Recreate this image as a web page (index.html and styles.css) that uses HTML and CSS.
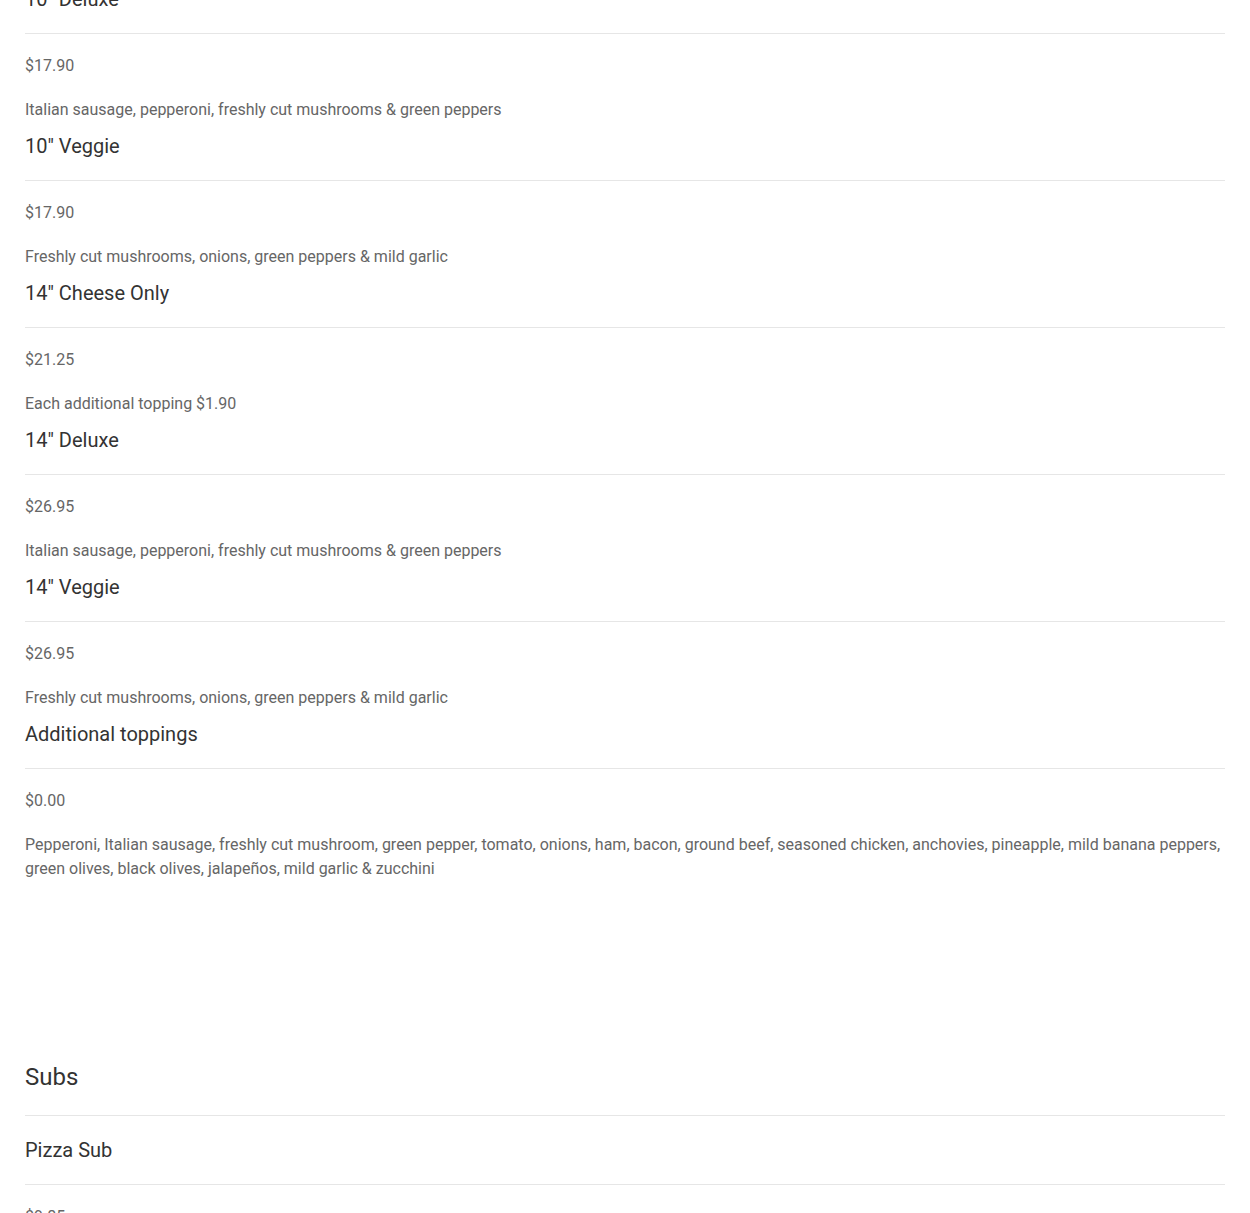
FILE: index.html
```html
<!DOCTYPE html>
<html lang="en">
<head>
  <meta charset="UTF-8" />
  <meta name="viewport" content="width=device-width, initial-scale=1.0" />
  <title>Menu</title>
  <link rel="stylesheet" href="styles.css">
</head>
<body>
  <div class="menu">
    <div class="section section-pizza">
      <div class="item">
        <h3 class="item-name">10" Deluxe</h3>
        <p class="item-price">$17.90</p>
        <p class="item-desc">Italian sausage, pepperoni, freshly cut mushrooms &amp; green peppers</p>
      </div>
      <div class="item">
        <h3 class="item-name">10" Veggie</h3>
        <p class="item-price">$17.90</p>
        <p class="item-desc">Freshly cut mushrooms, onions, green peppers &amp; mild garlic</p>
      </div>
      <div class="item">
        <h3 class="item-name">14" Cheese Only</h3>
        <p class="item-price">$21.25</p>
        <p class="item-desc">Each additional topping $1.90</p>
      </div>
      <div class="item">
        <h3 class="item-name">14" Deluxe</h3>
        <p class="item-price">$26.95</p>
        <p class="item-desc">Italian sausage, pepperoni, freshly cut mushrooms &amp; green peppers</p>
      </div>
      <div class="item">
        <h3 class="item-name">14" Veggie</h3>
        <p class="item-price">$26.95</p>
        <p class="item-desc">Freshly cut mushrooms, onions, green peppers &amp; mild garlic</p>
      </div>
      <div class="item">
        <h3 class="item-name">Additional toppings</h3>
        <p class="item-price">$0.00</p>
        <p class="item-desc">Pepperoni, Italian sausage, freshly cut mushroom, green pepper, tomato, onions, ham, bacon, ground beef, seasoned chicken, anchovies, pineapple, mild banana peppers, green olives, black olives, jalapeños, mild garlic &amp; zucchini</p>
      </div>
    </div>

    <div class="section">
      <h2 class="section-title">Subs</h2>
      <div class="item">
        <h3 class="item-name">Pizza Sub</h3>
        <p class="item-price">$9.85</p>
        <p class="item-desc">Pizza sauce, mozzarella &amp; pepperoni</p>
      </div>
    </div>
  </div>
</body>
</html>
```

FILE: styles.css
```css
body {
  margin: 0;
  font-family: Roboto, 'Liberation Sans', sans-serif;
  background-color: #fff;
  color: #333;
  overflow: hidden;
}

.menu {
  padding: 0 25px;
  margin-top: -13px;
}

.section + .section {
  margin-top: 182px;
}

.section-title {
  margin: 0;
  font-size: 24px;
  font-weight: 400;
  line-height: 28px;
  padding-bottom: 24px;
  border-bottom: 1px solid #e6e6e6;
  color: #333;
}

.section-title + .item {
  margin-top: 22px;
}

.item + .item {
  margin-top: 12px;
}

.item-name {
  margin: 0 0 20px;
  font-size: 20px;
  font-weight: 400;
  line-height: 24px;
  padding-bottom: 22px;
  border-bottom: 1px solid #e6e6e6;
  color: #333;
}

.item-price,
.item-desc {
  margin: 0;
  font-size: 16px;
  line-height: 24px;
  color: #666;
}

.item-price {
  margin-bottom: 20px;
}
```
